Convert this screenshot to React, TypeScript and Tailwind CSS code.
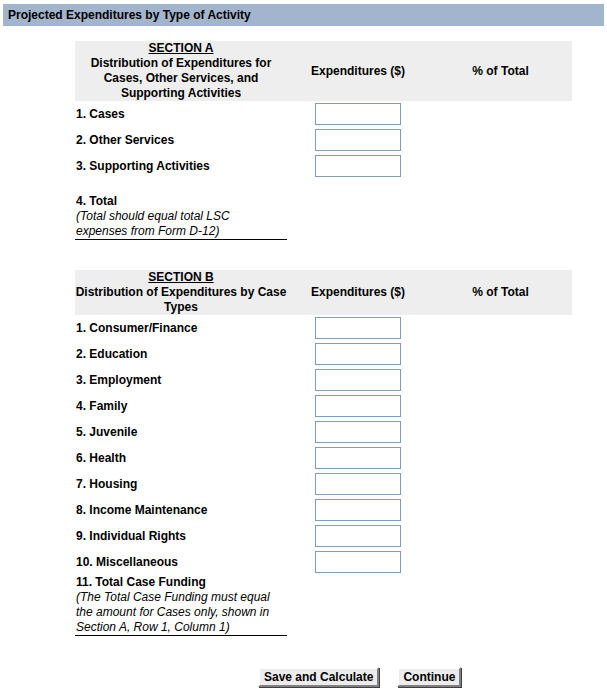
const sectionA = ['1. Cases', '2. Other Services', '3. Supporting Activities'];

const sectionB = [
  '1. Consumer/Finance',
  '2. Education',
  '3. Employment',
  '4. Family',
  '5. Juvenile',
  '6. Health',
  '7. Housing',
  '8. Income Maintenance',
  '9. Individual Rights',
  '10. Miscellaneous',
];

function HeaderRow({ title, lines }: { title: string; lines: string[] }) {
  return (
    <div className="grid grid-cols-[212px_142px_143px] bg-[#eeeeee] font-bold">
      <div className="flex flex-col items-center text-center">
        <span className="underline">{title}</span>
        {lines.map((l) => (
          <span key={l}>{l}</span>
        ))}
      </div>
      <div className="flex items-center justify-center">Expenditures ($)</div>
      <div className="flex items-center justify-center">% of Total</div>
    </div>
  );
}

function InputRow({ label }: { label: string }) {
  return (
    <div className="grid h-[26px] grid-cols-[212px_142px_143px] items-center">
      <div className="pl-px font-bold">{label}</div>
      <div className="flex justify-center">
        <input
          type="text"
          className="h-[22px] w-[86px] border border-[#7f9db9] bg-white outline-none"
        />
      </div>
      <div />
    </div>
  );
}

function TotalRow({ label, note }: { label: string; note: string[] }) {
  return (
    <div className="grid grid-cols-[212px_142px_143px]">
      <div className="border-b border-black pl-px">
        <div className="font-bold">{label}</div>
        {note.map((n) => (
          <div key={n} className="italic">
            {n}
          </div>
        ))}
      </div>
    </div>
  );
}

function Button({ children }: { children: string }) {
  return (
    <button className="h-[20px] border-2 border-t-white border-l-white border-r-[#808080] border-b-[#808080] bg-[#ececec] px-[4px] font-bold leading-none shadow-[1px_1px_0_#404040]">
      {children}
    </button>
  );
}

export default function App() {
  return (
    <div className="min-h-[696px] w-[607px] bg-white font-['Liberation_Sans',Arial,sans-serif] text-[12px] leading-[15px] text-black">
      <div className="pt-[4px] px-[3px]">
        <div className="flex h-[22px] items-center bg-[#a3b5cd] pl-[5px] font-bold">
          Projected Expenditures by Type of Activity
        </div>
      </div>

      <div className="ml-[75px] mt-[15px] w-[497px]">
        <HeaderRow
          title="SECTION A"
          lines={['Distribution of Expenditures for', 'Cases, Other Services, and', 'Supporting Activities']}
        />
        {sectionA.map((s) => (
          <InputRow key={s} label={s} />
        ))}
        <div className="h-[15px]" />
        <TotalRow
          label="4. Total"
          note={['(Total should equal total LSC', 'expenses from Form D-12)']}
        />

        <div className="h-[30px]" />

        <HeaderRow
          title="SECTION B"
          lines={['Distribution of Expenditures by Case', 'Types']}
        />
        {sectionB.map((s) => (
          <InputRow key={s} label={s} />
        ))}
        <TotalRow
          label="11. Total Case Funding"
          note={[
            '(The Total Case Funding must equal',
            'the amount for Cases only, shown in',
            'Section A, Row 1, Column 1)',
          ]}
        />
      </div>

      <div className="mt-[31px] flex gap-[18px] pl-[258px]">
        <Button>Save and Calculate</Button>
        <Button>Continue</Button>
      </div>
    </div>
  );
}
